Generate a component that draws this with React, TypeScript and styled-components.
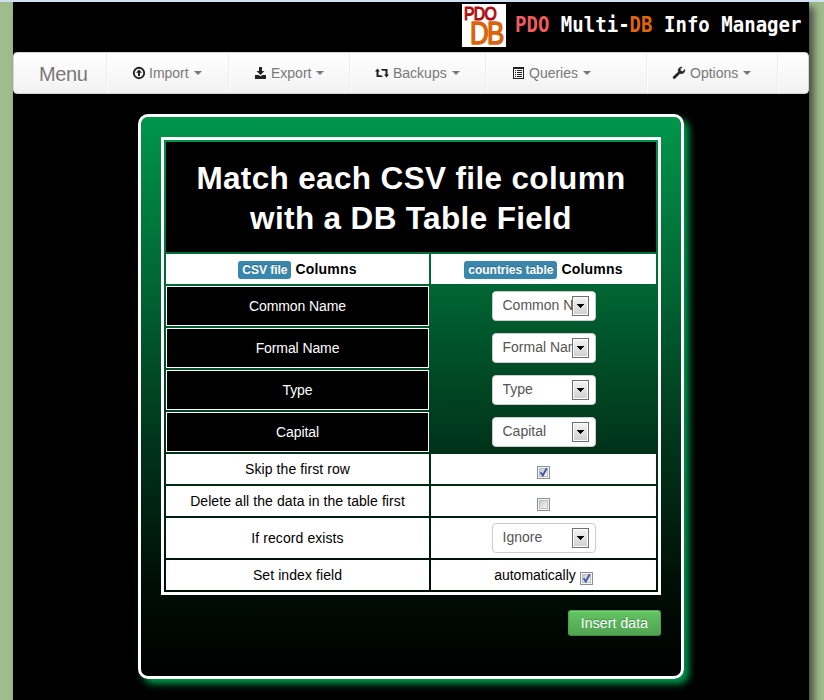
import React from "react";
import styled, { createGlobalStyle } from "styled-components";

const GlobalStyle = createGlobalStyle`
  * { box-sizing: border-box; }
  body {
    margin: 0;
    background: #9fbc8c;
    font-family: "Liberation Sans", Arial, sans-serif;
    font-size: 14px;
    line-height: 20px;
    color: #000;
    overflow: hidden;
  }
`;

const Page = styled.div`
  height: 700px;
  border-top: 2px solid #cfe0f2;
  padding: 0 15px 0 13px;
  overflow: hidden;
`;

const Wrapper = styled.div`
  height: 720px;
  background: #000;
  box-shadow: 5px 5px 7px #4b5046;
  display: flex;
  flex-direction: column;
`;

const Header = styled.header`
  height: 50px;
  flex: none;
  display: flex;
  justify-content: flex-end;
  align-items: flex-start;
  padding: 2px 8px 0 0;
`;

const Logo = styled.svg`
  display: block;
  flex: none;
  margin-right: 9px;
`;

const SiteTitle = styled.div`
  width: 286px;
  font: bold 19px/40px "DejaVu Sans Mono", monospace;
  letter-spacing: 0.02px;
  white-space: pre;
  color: #fff;
  transform: scaleY(1.1);
`;

const Tint = styled.span<{ $color: string }>`
  color: ${(p) => p.$color};
`;

const Navbar = styled.nav`
  height: 42px;
  flex: none;
  display: flex;
  border: 1px solid #d4d4d4;
  border-radius: 4px;
  background: linear-gradient(#fff, #f2f2f2);
  color: #777;
  text-shadow: 0 1px 0 #fff;
`;

const Brand = styled.div`
  width: 92px;
  padding: 1px 0 0 25px;
  font-size: 20px;
  line-height: 40px;
  letter-spacing: -0.4px;
`;

const NavItem = styled.div<{ $width: number; $pad: number; $gap?: number }>`
  width: ${(p) => p.$width}px;
  padding-left: ${(p) => p.$pad}px;
  display: flex;
  align-items: center;
  border-left: 1px solid #ececec;
  box-shadow: inset 1px 0 0 #fff;
  svg {
    flex: none;
    margin-right: ${(p) => p.$gap ?? 4}px;
  }
`;

const Caret = styled.i`
  margin-left: 5px;
  border: 4px solid transparent;
  border-top-color: #777;
  border-bottom: 0;
`;

const Panel = styled.main`
  width: 546px;
  height: 565px;
  flex: none;
  margin: 20px 0 0 125px;
  padding: 20px;
  display: flex;
  flex-direction: column;
  border: 3px solid #fff;
  border-radius: 10px;
  background: linear-gradient(#00964b, #006633 30%, #003219 60%, #000e06 84%, #000) padding-box;
  box-shadow: 5px 5px 7px #00964b;
`;

const Table = styled.div`
  width: 500px;
  padding: 2px;
  display: grid;
  grid-template-columns: 263px 225px;
  grid-template-rows: 110px 30px repeat(4, 40px) 30px 30px 40px 30px;
  gap: 2px;
  border: 3px solid #fff;
`;

const Cell = styled.div`
  display: flex;
  align-items: center;
  justify-content: center;
  background: #fff;
`;

const LabelCell = styled(Cell)`
  letter-spacing: 0.08px;
`;

const TitleCell = styled.h1`
  grid-column: 1 / -1;
  margin: 0;
  padding-top: 16px;
  background: #000;
  color: #fff;
  font-size: 31.5px;
  line-height: 40px;
  letter-spacing: 0.35px;
  text-align: center;
`;

const HeadCell = styled(Cell)`
  gap: 4px;
  font-weight: bold;
  letter-spacing: 0.2px;
`;

const Badge = styled.span`
  height: 18px;
  margin-top: 2px;
  padding: 0 4px;
  border-radius: 3px;
  background: #3a87ad;
  color: #fff;
  font-size: 12px;
  line-height: 18px;
  letter-spacing: -0.02px;
  text-shadow: 0 -1px 0 rgba(0, 0, 0, 0.25);
`;

const FieldCell = styled(Cell)`
  border: 1px solid #fff;
  background: #000;
  color: #fff;
  letter-spacing: -0.1px;
`;

const SelectCell = styled(Cell)<{ $clear?: boolean }>`
  background: ${(p) => (p.$clear ? "transparent" : "#fff")};
`;

const SelectBox = styled.div`
  width: 104px;
  height: 30px;
  padding: 4px 6px 4px 10px;
  display: flex;
  align-items: center;
  border: 1px solid #ccc;
  border-radius: 4px;
  background: #fff;
  color: #555;
`;

const SelectText = styled.span`
  flex: 1;
  min-width: 0;
  height: 20px;
  line-height: 18px;
  overflow: hidden;
  white-space: nowrap;
`;

const Arrow = styled.span`
  width: 17px;
  height: 20px;
  flex: none;
  display: flex;
  align-items: center;
  justify-content: center;
  border: 1px solid #707070;
  background: linear-gradient(#f4f4f4, #cfcfcf);
  box-shadow: inset 0 0 0 1px #fafafa;
`;

const ControlCell = styled(Cell)`
  gap: 4px;
`;

const CheckSvg = styled.svg`
  display: block;
  flex: none;
  margin-top: 7px;
`;

const Button = styled.button`
  width: 93px;
  height: 26px;
  margin: 15px 0 0;
  padding: 0;
  align-self: flex-end;
  border: 1px solid #4ba14b;
  border-bottom-color: #3d883d;
  border-radius: 3px;
  background: linear-gradient(#62c462, #51a351);
  box-shadow: inset 0 1px 0 rgba(255, 255, 255, 0.2);
  color: #fff;
  font: 14px/24px "Liberation Sans", Arial, sans-serif;
  letter-spacing: 0.1px;
  text-shadow: 0 -1px 0 rgba(0, 0, 0, 0.25);
`;

const ImportIcon = () => (
  <svg width="14" height="14" viewBox="0 0 14 14">
    <circle cx="7" cy="7" r="5.2" fill="none" stroke="#222" strokeWidth="1.9" />
    <path d="M7 3.400 10 6.800H8V10H6V6.800H4Z" fill="#222" />
  </svg>
);

const ExportIcon = () => (
  <svg width="14" height="14" viewBox="0 0 14 14">
    <path d="M6 1h3v4h2.500L7.500 9 3.500 5H6ZM2 9h3.500l2 1.200 2-1.200H13v4H2Z" fill="#222" />
  </svg>
);

const BackupIcon = () => (
  <svg width="14" height="14" viewBox="0 0 14 14">
    <path d="M2.500 2.500 5 5.500H3.500V9.300H6.500L8 11H1.500V5.500H0ZM5.800 3h6.700v5.500H14L11.500 11.500 9 8.500h1.500V4.800H7.300Z" fill="#222" />
  </svg>
);

const ListIcon = () => (
  <svg width="14" height="14" viewBox="0 0 14 14" shapeRendering="crispEdges">
    <path d="M2 1h11v12H2ZM3 3v9h9V3Z" fill="#222" fillRule="evenodd" />
    <path d="M4 4h1v1H4ZM6 4h5v1H6ZM4 6h1v1H4ZM6 6h5v1H6ZM4 8h1v1H4ZM6 8h5v1H6ZM4 10h1v1H4ZM6 10h5v1H6Z" fill="#222" />
  </svg>
);

const WrenchIcon = () => (
  <svg width="14" height="14" viewBox="0 0 14 14">
    <path
      d="M12.800 3.300 10.700 5.400 8.700 5 8.300 3.100 10.300 1C8.300.6 6.200 2 6.100 4.200L6.300 5.900 1.300 10.600C.3 11.600 1.800 13.500 3 12.500L8 7.600C10.700 8.500 13.500 6.200 12.800 3.300Z"
      fill="#222"
      stroke="#222"
      strokeWidth=".4"
    />
  </svg>
);

const CheckBox = ({ checked }: { checked?: boolean }) => (
  <CheckSvg width="13" height="13" viewBox="0 0 13 13">
    <defs>
      <linearGradient id="box-face" x1="0" y1="0" x2="1" y2="1">
        <stop offset="0" stopColor="#c5c8cc" />
        <stop offset="1" stopColor="#f6f6f6" />
      </linearGradient>
    </defs>
    <rect x=".5" y=".5" width="12" height="12" fill="#f4f4f4" stroke="#8e8f8f" />
    <rect x="2.500" y="2.500" width="8" height="8" fill="url(#box-face)" stroke="#bcc0c5" />
    {checked && <path d="m3.500 6.200 2.300 3.300L9.700 2.300" fill="none" stroke="#4358a0" strokeWidth="1.900" />}
  </CheckSvg>
);

const Select = ({ value }: { value: string }) => (
  <SelectBox>
    <SelectText>{value}</SelectText>
    <Arrow>
      <svg width="7" height="4" viewBox="0 0 7 4" shapeRendering="crispEdges">
        <path d="M0 0h7v1H6v1H5v1H4v1H3V3H2V2H1V1H0Z" fill="#000" />
      </svg>
    </Arrow>
  </SelectBox>
);

const menu = [
  { label: "Import", Icon: ImportIcon, width: 122, pad: 25, gap: 3 },
  { label: "Export", Icon: ExportIcon, width: 121, pad: 24 },
  { label: "Backups", Icon: BackupIcon, width: 136, pad: 25 },
  { label: "Queries", Icon: ListIcon, width: 161, pad: 25 },
  { label: "Options", Icon: WrenchIcon, width: 131, pad: 25 },
];

const fields = ["Common Name", "Formal Name", "Type", "Capital"];

export default function App() {
  return (
    <>
      <GlobalStyle />
      <Page>
        <Wrapper>
          <Header>
            <Logo width="44" height="43" viewBox="0 0 44 43">
              <rect width="44" height="43" fill="#fff" />
              <g fontFamily="Liberation Sans" strokeLinejoin="round">
                <text transform="translate(2 15.800) scale(.83 1)" fontSize="19" letterSpacing="-.8" fill="#b00d12" stroke="#b00d12" strokeWidth="1.200">PDO</text>
                <text transform="translate(8 39.500) scale(.85 1)" fontSize="30.500" letterSpacing="-2" fill="#d9640c" stroke="#d9640c" strokeWidth="1.500">DB</text>
              </g>
            </Logo>
            <SiteTitle>
              <Tint $color="#f05b62">PDO</Tint> Multi-<Tint $color="#e0650d">DB</Tint> Info Manager
            </SiteTitle>
          </Header>
          <Navbar>
            <Brand>Menu</Brand>
            {menu.map(({ label, Icon, width, pad, gap }) => (
              <NavItem key={label} $width={width} $pad={pad} $gap={gap}>
                <Icon />
                {label}
                <Caret />
              </NavItem>
            ))}
            <NavItem $width={30} $pad={0} />
          </Navbar>
          <Panel>
            <Table>
              <TitleCell>
                Match each CSV file column
                <br />
                with a DB Table Field
              </TitleCell>
              <HeadCell>
                <Badge>CSV file</Badge>Columns
              </HeadCell>
              <HeadCell>
                <Badge>countries table</Badge>Columns
              </HeadCell>
              {fields.map((name) => (
                <React.Fragment key={name}>
                  <FieldCell>{name}</FieldCell>
                  <SelectCell $clear>
                    <Select value={name} />
                  </SelectCell>
                </React.Fragment>
              ))}
              <LabelCell>Skip the first row</LabelCell>
              <ControlCell>
                <CheckBox checked />
              </ControlCell>
              <LabelCell>Delete all the data in the table first</LabelCell>
              <ControlCell>
                <CheckBox />
              </ControlCell>
              <LabelCell>If record exists</LabelCell>
              <SelectCell>
                <Select value="Ignore" />
              </SelectCell>
              <LabelCell>Set index field</LabelCell>
              <ControlCell>
                automatically
                <CheckBox checked />
              </ControlCell>
            </Table>
            <Button>Insert data</Button>
          </Panel>
        </Wrapper>
      </Page>
    </>
  );
}
